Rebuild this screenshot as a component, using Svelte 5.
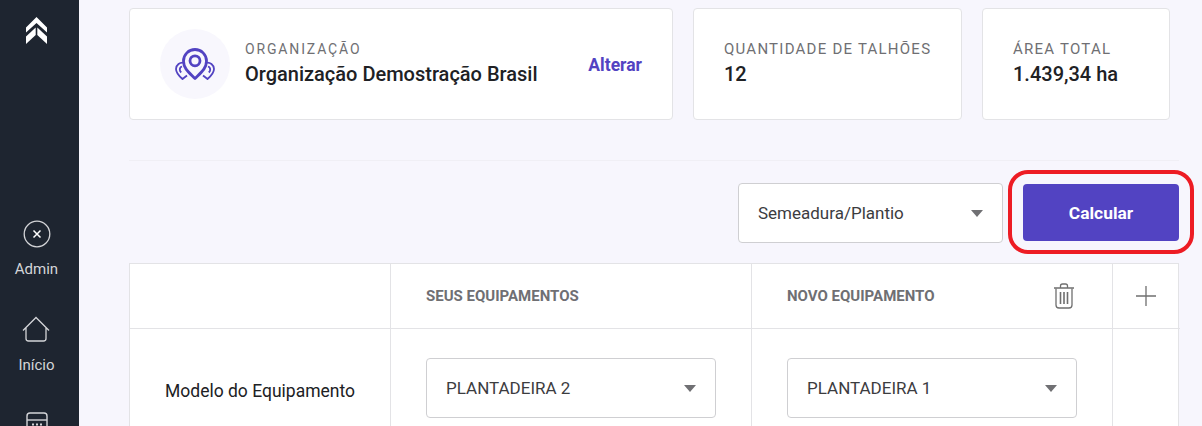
<script lang="ts">
	const navItems = [
		{ label: 'Admin', icon: 'admin' },
		{ label: 'Início', icon: 'home' }
	];

	const stats = [
		{ label: 'QUANTIDADE DE TALHÕES', value: '12', cls: 'plots' },
		{ label: 'ÁREA TOTAL', value: '1.439,34 ha', cls: 'area' }
	];
</script>

<div class="page">
	<aside class="sidebar">
		<svg class="logo" viewBox="0 0 21 27" fill="#fff">
			<path d="M10.500 0 21 10.500V15.500L10.500 6 0 15.500V10.500Z" />
			<path d="M9.700 10.500 0 19.500V27L9.700 18Z" />
			<path d="M11.300 10.500 21 19.500V27L11.300 18Z" />
		</svg>

		<nav class="nav">
			{#each navItems as item}
				<div class="nav-item">
					{#if item.icon === 'admin'}
						<svg viewBox="0 0 28 28" fill="none" stroke="#d4d5d8" stroke-width="1.3">
							<circle cx="14" cy="14" r="12.800" />
							<path d="M10.500 10.500l7 7M17.500 10.500l-7 7" stroke="#fff" stroke-width="1.500" />
						</svg>
					{:else}
						<svg viewBox="0 0 28 28" fill="none" stroke="#d4d5d8" stroke-width="1.3">
							<path d="M1 14.500 14 1.500l13 13M4 12v10.500a2.500 2.500 0 0 0 2.500 2.500h15a2.500 2.500 0 0 0 2.500-2.500V12" />
						</svg>
					{/if}
					<span>{item.label}</span>
				</div>
			{/each}
			<div class="nav-item">
				<svg viewBox="0 0 28 28" fill="none" stroke="#d4d5d8" stroke-width="1.400">
					<rect x="4" y="1" width="20" height="26" rx="3" />
					<path d="M4 8h20" />
					<path d="M9 12.500h2M13 12.500h2M17 12.500h2" stroke-width="2" />
				</svg>
			</div>
		</nav>
	</aside>

	<main class="content">
		<section class="cards">
			<div class="card org">
				<div class="org-icon">
					<svg viewBox="0 0 40 32" fill="none" stroke="#5243c2">
						<path d="M9 14.800A6.500 6.500 0 0 0 1 21c0 4 3 7 6.500 10l4.500-3.500" stroke-width="1.800" stroke-linejoin="round" />
						<path d="M7 18.500a3.200 3.200 0 0 0-2.200 3.200c0 1 .6 2 1.400 2.800" stroke-width="1.800" />
						<path d="M31 14.800A6.500 6.500 0 0 1 39 21c0 4-3 7-6.500 10l-4.500-3.500" stroke-width="1.800" stroke-linejoin="round" />
						<path d="M33 18.500a3.200 3.200 0 0 1 2.200 3.200c0 1-.6 2-1.400 2.800" stroke-width="1.800" />
						<path d="M20 30.500C14 24.500 8.500 20.500 8.500 13a11.500 11.500 0 0 1 23 0C31.500 20.500 26 24.500 20 30.500Z" stroke-width="2.800" fill="#f8f7fd" stroke-linejoin="round" />
						<circle cx="20" cy="12.800" r="5" stroke-width="2.800" />
					</svg>
				</div>
				<div class="info">
					<span class="label">ORGANIZAÇÃO</span>
					<strong class="value">Organização Demostração Brasil</strong>
				</div>
				<a class="change" href="#alterar">Alterar</a>
			</div>

			{#each stats as stat}
				<div class="card stat {stat.cls}">
					<span class="label">{stat.label}</span>
					<strong class="value">{stat.value}</strong>
				</div>
			{/each}
		</section>

		<hr class="divider" />

		<section class="actions">
			<div class="select op">
				<span>Semeadura/Plantio</span>
				<i class="caret"></i>
			</div>
			<button class="calc">
				Calcular
				<span class="ring"></span>
			</button>
		</section>

		<section class="table">
			<div class="cell head first"></div>
			<div class="cell head col">SEUS EQUIPAMENTOS</div>
			<div class="cell head col new">
				NOVO EQUIPAMENTO
				<svg class="trash" viewBox="0 0 22 26" fill="none" stroke="#6f6f6f" stroke-width="1.300">
					<path d="M1 5h20M7.500 4.500V3a2 2 0 0 1 2-2h3a2 2 0 0 1 2 2v1.500" />
					<path d="M3 5.500V22a3 3 0 0 0 3 3h10a3 3 0 0 0 3-3V5.500" />
					<path d="M7.500 9v12M11 9v12M14.500 9v12" stroke-width="1.600" />
				</svg>
			</div>
			<div class="cell head plus">
				<svg viewBox="0 0 20 20" fill="none" stroke="#6f6f6f" stroke-width="1.300">
					<path d="M10 0v20M0 10h20" />
				</svg>
			</div>

			<div class="cell row-label">Modelo do Equipamento</div>
			<div class="cell field">
				<div class="select"><span>PLANTADEIRA 2</span><i class="caret"></i></div>
			</div>
			<div class="cell field">
				<div class="select"><span>PLANTADEIRA 1</span><i class="caret"></i></div>
			</div>
			<div class="cell"></div>
		</section>
	</main>
</div>

<style>
	:global(body) {
		margin: 0;
		overflow: hidden;
		background: #f7f6fd;
	}

	.page {
		display: flex;
		height: 426px;
		overflow: hidden;
		font-family: Roboto, 'Liberation Sans', sans-serif;
		color: #202124;
	}

	.sidebar {
		flex: 0 0 79px;
		display: flex;
		flex-direction: column;
		align-items: center;
		background: #1e2530;
		box-sizing: border-box;
		padding: 17px 6px 0 0;
	}

	.logo {
		width: 21px;
		height: 27px;
		flex: none;
	}

	.nav {
		display: flex;
		flex-direction: column;
		align-items: center;
		margin-top: 176px;
		gap: 39px;
	}

	.nav-item {
		display: flex;
		flex-direction: column;
		align-items: center;
		gap: 13px;
		font-size: 15px;
		line-height: 16px;
		color: #d4d5d8;
	}

	.nav-item svg {
		width: 28px;
		height: 28px;
	}

	.content {
		flex: 1;
		min-width: 0;
		padding: 8px 23px 0 50px;
	}

	.cards {
		display: flex;
		gap: 20px;
	}

	.card {
		box-sizing: border-box;
		height: 112px;
		background: #fff;
		border: 1px solid #e3e3e6;
		border-radius: 4px;
	}

	.org {
		width: 544px;
		display: flex;
		align-items: center;
		padding: 0 30px 0 30px;
	}

	.org-icon {
		flex: none;
		width: 70px;
		height: 70px;
		border-radius: 50%;
		background: #f8f7fd;
		display: flex;
		align-items: center;
		justify-content: center;
		margin-right: 15px;
	}

	.org-icon svg {
		width: 40px;
		height: 32px;
	}

	.info,
	.stat {
		display: flex;
		flex-direction: column;
		gap: 5px;
	}

	.info {
		flex: 1;
		margin-top: -1px;
	}

	.stat {
		justify-content: center;
		padding: 0 0 1px 30px;
	}

	.plots {
		width: 269px;
	}

	.area {
		width: 188px;
	}

	.label {
		font-size: 15px;
		line-height: 16px;
		letter-spacing: 1.240px;
		white-space: nowrap;
		color: #6f6f73;
	}

	.info .label {
		font-size: 14px;
		letter-spacing: 1.850px;
	}

	.value {
		font-size: 20px;
		line-height: 24px;
		font-weight: 500;
		color: #202124;
	}

	.change {
		font-size: 17.500px;
		font-weight: 700;
		color: #5243c2;
		text-decoration: none;
		margin-top: 2px;
	}

	.divider {
		margin: 40px 0 22px;
		border: 0;
		border-top: 1px solid #f0eff5;
	}

	.actions {
		display: flex;
		justify-content: flex-end;
		align-items: flex-start;
		gap: 20px;
		height: 60px;
	}

	.select {
		box-sizing: border-box;
		height: 60px;
		display: flex;
		align-items: center;
		justify-content: space-between;
		padding: 0 19px;
		background: #fff;
		border: 1px solid #cfcfd2;
		border-radius: 4px;
		font-size: 17px;
		color: #3c3c3f;
	}

	.op {
		width: 265px;
	}

	.caret {
		width: 0;
		height: 0;
		border-left: 6.500px solid transparent;
		border-right: 6.500px solid transparent;
		border-top: 7px solid #707073;
	}

	.calc {
		position: relative;
		width: 156px;
		height: 57px;
		margin-top: 1px;
		border: 0;
		border-radius: 4px;
		background: #5243c2;
		color: #fff;
		font: 700 17.400px Roboto, 'Liberation Sans', sans-serif;
	}

	.ring {
		position: absolute;
		left: -15px;
		top: -14px;
		right: -15px;
		bottom: -13px;
		border: 4px solid #ed1c24;
		border-radius: 20px;
		pointer-events: none;
	}

	.table {
		display: grid;
		grid-template-columns: 261px 361px 361px 67px;
		grid-template-rows: 65px 98px;
		margin-top: 20px;
		background: #fff;
		border: 1px solid #e3e3e6;
		border-bottom: 0;
		width: 1050px;
		box-sizing: border-box;
	}

	.cell {
		box-sizing: border-box;
		border-right: 1px solid #e3e3e6;
	}

	.cell:nth-child(4n) {
		border-right: 0;
	}

	.head {
		display: flex;
		align-items: center;
		border-bottom: 1px solid #e3e3e6;
	}

	.col {
		padding-left: 35px;
		font-size: 15px;
		font-weight: 700;
		color: #6f6f73;
	}

	.new {
		justify-content: space-between;
		padding-right: 37px;
	}

	.trash {
		width: 22px;
		height: 26px;
	}

	.plus {
		justify-content: center;
		padding-right: 2px;
	}

	.plus svg {
		width: 20px;
		height: 20px;
	}

	.row-label {
		display: flex;
		align-items: center;
		padding: 25px 0 0 35px;
		font-size: 17.500px;
		color: #202124;
	}

	.field {
		padding: 29px 35px 0;
	}
</style>
